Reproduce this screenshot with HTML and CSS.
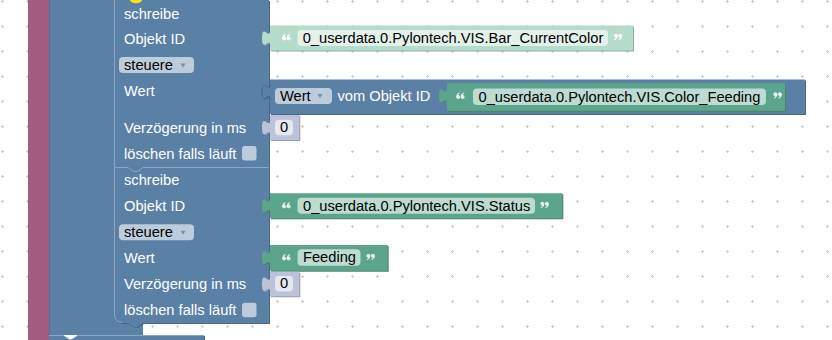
FILE: index.html
```html
<!DOCTYPE html>
<html lang="de">
<head>
  <meta charset="UTF-8" />
  <title>Blockly Workspace</title>
  <link rel="stylesheet" href="styles.css">
</head>
<body>
  <div class="workspace">
    <svg class="canvas" width="832" height="340" viewBox="0 0 832 340">
      <defs>
        <pattern id="grid" width="25" height="25" patternUnits="userSpaceOnUse">
          <rect class="grid-dot" x="1" y="1" width="3" height="1" />
          <rect class="grid-dot" x="2" y="0" width="1" height="3" />
        </pattern>
        <!-- quote marks of the text block -->
        <symbol id="q-open" viewBox="0 0 10 8">
          <circle cx="2.4" cy="5.6" r="2.2" />
          <path d="M0.3,5.8 Q0.2,1.6 3.9,0.6 L4.2,1.4 Q2.1,2.4 2.2,4.6 Z" />
          <circle cx="7.4" cy="5.6" r="2.2" />
          <path d="M5.3,5.8 Q5.2,1.6 8.9,0.6 L9.2,1.4 Q7.1,2.4 7.2,4.6 Z" />
        </symbol>
        <symbol id="q-close" viewBox="0 0 10 8">
          <g transform="rotate(180 5 4)">
            <circle cx="2.4" cy="5.6" r="2.2" />
            <path d="M0.3,5.8 Q0.2,1.6 3.9,0.6 L4.2,1.4 Q2.1,2.4 2.2,4.6 Z" />
            <circle cx="7.4" cy="5.6" r="2.2" />
            <path d="M5.3,5.8 Q5.2,1.6 8.9,0.6 L9.2,1.4 Q7.1,2.4 7.2,4.6 Z" />
          </g>
        </symbol>
      </defs>

      <!-- background -->
      <rect class="bg" width="832" height="340" />
      <rect class="bg-grid" width="832" height="340" />

      <!-- outer blocks (procedure + trigger) -->
      <rect class="fill-pink" x="28" y="0" width="21" height="340" />
      <rect class="fill-blue" x="49" y="0" width="94" height="335" />
      <rect class="edge-blue" x="49" y="0" width="1" height="335" />

      <!-- next block at the bottom -->
      <path class="fill-blue-dark" transform="translate(1,1)" d="M49,335 H63 l6,4 3,0 6,-4 H204 V350 H49 Z" />
      <path class="fill-blue" d="M49,335 H63 l6,4 3,0 6,-4 H204 V350 H49 Z" />
      <path class="line-blue-light" d="M49,335.5 H63 l6,4 3,0 6,-4 H203.5" />

      <!-- schreibe block 1 -->
      <g class="stmt">
        <path class="fill-blue-dark" transform="translate(1,1)" d="M114,0 H128 l6,4 3,0 6,-4 H269 V167 H143 l-6,4 -3,0 -6,-4 H114 Z" />
        <path class="fill-blue" d="M114,0 H128 l6,4 3,0 6,-4 H269 V167 H143 l-6,4 -3,0 -6,-4 H114 Z" />
        <path class="line-blue-light" d="M114.5,167 V0" />
        <ellipse class="connection-hl" cx="136" cy="0" rx="6" ry="3.2" />

        <text class="lbl" x="124" y="18.5">schreibe</text>
        <text class="lbl" x="124" y="44">Objekt ID</text>
        <rect class="dd" x="119" y="57" width="75" height="16" rx="4" />
        <text class="fld-text" x="124" y="69.8">steuere</text>
        <polygon class="dd-arrow" points="180.5,63.5 185.5,63.5 183,67.5" />
        <text class="lbl" x="124" y="95.5">Wert</text>
        <text class="lbl" x="124" y="133.3">Verzögerung in ms</text>
        <text class="lbl" x="124" y="159.3">löschen falls läuft</text>
        <rect class="check" x="242" y="146" width="14.5" height="14.5" rx="3" />
      </g>

      <!-- schreibe block 2 -->
      <g class="stmt">
        <path class="fill-blue-dark" transform="translate(1,1)" d="M114,167 H128 l6,4 3,0 6,-4 H269 V323 H143 l-6,4 -3,0 -6,-4 H122 a8,8 0 0 1 -8,-8 Z" />
        <path class="fill-blue" d="M114,167 H128 l6,4 3,0 6,-4 H269 V323 H143 l-6,4 -3,0 -6,-4 H122 a8,8 0 0 1 -8,-8 Z" />
        <path class="line-blue-light" d="M122,322.5 a7.5,7.5 0 0 1 -7.5,-7.5 V167.5 H128 l6,4 3,0 6,-4 H268.5" />

        <text class="lbl" x="124" y="185">schreibe</text>
        <text class="lbl" x="124" y="211.3">Objekt ID</text>
        <rect class="dd" x="119" y="224.3" width="75" height="16" rx="4" />
        <text class="fld-text" x="124" y="237">steuere</text>
        <polygon class="dd-arrow" points="180.5,230.8 185.5,230.8 183,234.8" />
        <text class="lbl" x="124" y="262.7">Wert</text>
        <text class="lbl" x="124" y="289.3">Verzögerung in ms</text>
        <text class="lbl" x="124" y="315">löschen falls läuft</text>
        <rect class="check" x="242" y="302.7" width="14.5" height="14.5" rx="3" />
      </g>

      <!-- Objekt ID 1: text shadow block -->
      <g class="out">
        <path class="fill-mint-dark" transform="translate(1,1)" d="M270,25.5 H633 V50.5 H270 V45.5 c0,-10 -8,8 -8,-7.5 s8,2.5 8,-7.5 Z" />
        <path class="fill-mint" d="M270,25.5 H633 V50.5 H270 V45.5 c0,-10 -8,8 -8,-7.5 s8,2.5 8,-7.5 Z" />
        <use class="quote quote-shadow" href="#q-open" x="282" y="33.5" width="9" height="7.2" />
        <rect class="fld-shadow" x="297.5" y="30" width="310.5" height="16" rx="4" />
        <text class="fld-text" x="302.7" y="42.5">0_userdata.0.Pylontech.VIS.Bar_CurrentColor</text>
        <use class="quote quote-shadow" href="#q-close" x="613.5" y="33.5" width="9" height="7.2" />
      </g>

      <!-- Wert 1: Wert vom Objekt ID -->
      <g class="out">
        <path class="fill-blue-dark" transform="translate(1,1)" d="M270,79.5 H805 V114 H270 V99.5 c0,-10 -8,8 -8,-7.5 s8,2.5 8,-7.5 Z" />
        <path class="fill-blue" d="M270,79.5 H805 V114 H270 V99.5 c0,-10 -8,8 -8,-7.5 s8,2.5 8,-7.5 Z" />
        <path class="line-blue-dark" d="M270,99.5 c0,-10 -8,8 -8,-7.5 s8,2.5 8,-7.5" />
        <rect class="dd" x="275" y="88" width="57" height="16" rx="4" />
        <text class="fld-text" x="280" y="100.6">Wert</text>
        <polygon class="dd-arrow" points="317.5,94 322.5,94 320,98" />
        <text class="lbl" x="337.5" y="100.6">vom Objekt ID</text>

        <path class="fill-green-dark" transform="translate(1,1)" d="M447,83.3 H785 V110.7 H447 V103.3 c0,-10 -8,8 -8,-7.5 s8,2.5 8,-7.5 Z" />
        <path class="fill-green" d="M447,83.3 H785 V110.7 H447 V103.3 c0,-10 -8,8 -8,-7.5 s8,2.5 8,-7.5 Z" />
        <use class="quote" href="#q-open" x="456" y="92" width="9" height="7.2" />
        <rect class="fld" x="473" y="88.5" width="293" height="16.5" rx="4" />
        <text class="fld-text" x="478.5" y="101.5">0_userdata.0.Pylontech.VIS.Color_Feeding</text>
        <use class="quote" href="#q-close" x="773" y="92" width="9" height="7.2" />
      </g>

      <!-- Verzögerung 1 -->
      <g class="out">
        <path class="fill-lav-dark" transform="translate(1,1)" d="M270,115 H299.3 V140 H270 V135 c0,-10 -8,8 -8,-7.5 s8,2.5 8,-7.5 Z" />
        <path class="fill-lav" d="M270,115 H299.3 V140 H270 V135 c0,-10 -8,8 -8,-7.5 s8,2.5 8,-7.5 Z" />
        <rect class="fld-lav" x="275" y="119.8" width="18" height="15.5" rx="4" />
        <text class="fld-text num" x="284" y="132.3">0</text>
      </g>

      <!-- Objekt ID 2 -->
      <g class="out">
        <path class="fill-green-dark" transform="translate(1,1)" d="M270,193.3 H562.3 V218.3 H270 V213.3 c0,-10 -8,8 -8,-7.5 s8,2.5 8,-7.5 Z" />
        <path class="fill-green" d="M270,193.3 H562.3 V218.3 H270 V213.3 c0,-10 -8,8 -8,-7.5 s8,2.5 8,-7.5 Z" />
        <use class="quote" href="#q-open" x="282" y="201.5" width="9" height="7.2" />
        <rect class="fld" x="297.5" y="197.8" width="237.5" height="16" rx="4" />
        <text class="fld-text" x="303" y="210.6">0_userdata.0.Pylontech.VIS.Status</text>
        <use class="quote" href="#q-close" x="540" y="201.5" width="9" height="7.2" />
      </g>

      <!-- Wert 2 -->
      <g class="out">
        <path class="fill-green-dark" transform="translate(1,1)" d="M270,245 H387.7 V270.7 H270 V265 c0,-10 -8,8 -8,-7.5 s8,2.5 8,-7.5 Z" />
        <path class="fill-green" d="M270,245 H387.7 V270.7 H270 V265 c0,-10 -8,8 -8,-7.5 s8,2.5 8,-7.5 Z" />
        <use class="quote" href="#q-open" x="282" y="253.5" width="9" height="7.2" />
        <rect class="fld" x="297.5" y="249.3" width="63" height="16.5" rx="4" />
        <text class="fld-text" x="303" y="262.2">Feeding</text>
        <use class="quote" href="#q-close" x="366" y="253.5" width="9" height="7.2" />
      </g>

      <!-- Verzögerung 2 -->
      <g class="out">
        <path class="fill-lav-dark" transform="translate(1,1)" d="M270,271.7 H299.3 V296.2 H270 V291.7 c0,-10 -8,8 -8,-7.5 s8,2.5 8,-7.5 Z" />
        <path class="fill-lav" d="M270,271.7 H299.3 V296.2 H270 V291.7 c0,-10 -8,8 -8,-7.5 s8,2.5 8,-7.5 Z" />
        <rect class="fld-lav" x="275" y="276" width="18" height="15.5" rx="4" />
        <text class="fld-text num" x="284" y="288.4">0</text>
      </g>
    </svg>
  </div>
</body>
</html>
```

FILE: styles.css
```css
:root {
  --blue: #5b80a5;
  --blue-light: #8ca6c0;
  --blue-dark: #496684;
  --green: #5ba58c;
  --green-dark: #49846f;
  --mint: #b5dcca;
  --mint-dark: #8fb3a3;
  --lav: #bdc2db;
  --lav-dark: #979bb8;
  --pink: #a55b80;
}

* {
  box-sizing: border-box;
  margin: 0;
  padding: 0;
}

body {
  background: #ffffff;
  overflow: hidden;
}

.workspace {
  width: 832px;
  height: 340px;
  overflow: hidden;
}

.canvas {
  display: block;
  font-family: 'Liberation Sans', Arial, sans-serif;
  font-size: 14.67px;
}

.bg { fill: #ffffff; }
.bg-grid { fill: url(#grid); }
.grid-dot { fill: #cccccc; }

.fill-pink { fill: var(--pink); }
.fill-blue { fill: var(--blue); }
.fill-blue-dark { fill: var(--blue-dark); }
.edge-blue { fill: #51739a; }
.fill-green { fill: var(--green); }
.fill-green-dark { fill: var(--green-dark); }
.fill-mint { fill: var(--mint); }
.fill-mint-dark { fill: var(--mint-dark); }
.fill-lav { fill: var(--lav); }
.fill-lav-dark { fill: var(--lav-dark); }

.line-blue-light {
  fill: none;
  stroke: var(--blue-light);
  stroke-width: 1;
}

.line-blue-dark {
  fill: none;
  stroke: var(--blue-dark);
  stroke-width: 1;
}

.connection-hl { fill: #f6e11a; }

/* labels on blocks */
.lbl { fill: #ffffff; }

/* editable fields */
.fld-text { fill: #000000; }
.fld-text.num { text-anchor: middle; }

.fld { fill: #ffffff; fill-opacity: 0.6; }
.fld-shadow { fill: #e3f1ea; }
.fld-lav { fill: #e6e8f1; }

.dd { fill: #ffffff; fill-opacity: 0.6; }
.dd-arrow { fill: #7890ab; }

.check { fill: #ffffff; fill-opacity: 0.6; }

/* quote marks of text blocks */
.quote {
  fill: #ffffff;
  fill-opacity: 0.8;
}

.quote-shadow { fill-opacity: 1; }
```
